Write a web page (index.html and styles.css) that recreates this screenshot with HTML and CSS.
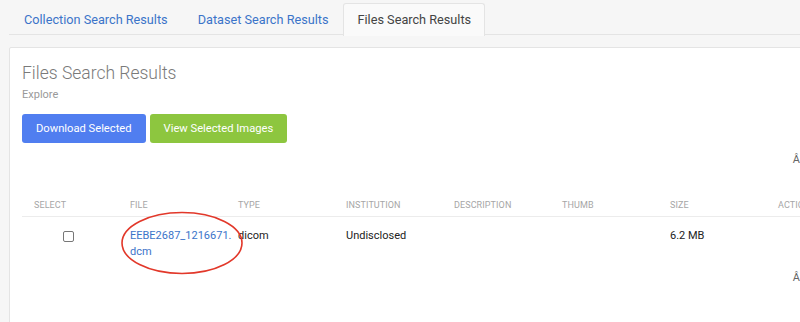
FILE: index.html
```html
<!DOCTYPE html>
<html>
<head>
    <meta charset="utf-8">
    <meta name="viewport" content="width=device-width, initial-scale=1">
    <title>Files Search Results</title>
    <link rel="stylesheet" href="styles.css">
</head>
<body>
    <ul class="tabs">
        <li class="tab"><a href="#">Collection Search Results</a></li>
        <li class="tab"><a href="#">Dataset Search Results</a></li>
        <li class="tab active"><a href="#">Files Search Results</a></li>
    </ul>

    <div class="card">
        <div class="card-title">Files Search Results</div>
        <div class="card-subtitle">Explore</div>

        <div class="actions">
            <button class="btn btn-blue">Download Selected</button>
            <button class="btn btn-green">View Selected Images</button>
        </div>

        <div class="pager">Â</div>

        <div class="results">
            <div class="row head-row">
                <div class="cell">Select</div>
                <div class="cell">File</div>
                <div class="cell">Type</div>
                <div class="cell">Institution</div>
                <div class="cell">Description</div>
                <div class="cell">Thumb</div>
                <div class="cell">Size</div>
                <div class="cell">Actions</div>
            </div>
            <div class="row body-row">
                <div class="cell select-cell"><input type="checkbox" class="check"></div>
                <div class="cell file-cell">
                    <a href="#">EEBE2687_1216671.<wbr>dcm</a>
                    <svg class="circle-mark" width="126" height="66" viewBox="0 0 126 66">
                        <ellipse cx="63" cy="33" rx="60" ry="30.5" fill="none" stroke="#e2382a" stroke-width="1.6"/>
                    </svg>
                </div>
                <div class="cell">dicom</div>
                <div class="cell">Undisclosed</div>
                <div class="cell"></div>
                <div class="cell"></div>
                <div class="cell">6.2 MB</div>
                <div class="cell"></div>
            </div>
        </div>

        <div class="pager pager-bottom">Â</div>
    </div>
</body>
</html>
```

FILE: styles.css
```css
:root {
    --bg-color: #f6f6f6;
    --border: #e4e4e4;
    --link: #3b74c9;
    --text: #222222;
    --blue: #507ef0;
    --green: #8dc63f;
}

* {
    margin: 0;
    padding: 0;
    box-sizing: border-box;
    font-family: Roboto, 'Liberation Sans', sans-serif;
}

html {
    overflow: hidden;
}

body {
    background-color: var(--bg-color);
    color: var(--text);
    padding: 3px 0 0 9px;
    width: 830px;
}

.tabs {
    list-style: none;
    display: flex;
    border-bottom: 1px solid var(--border);
    height: 32px;
}

.tab {
    height: 32px;
}

.tab a {
    display: block;
    height: 32px;
    line-height: 31px;
    padding: 0 14px;
    font-size: 12.7px;
    color: var(--link);
    text-decoration: none;
    border: 1px solid transparent;
    border-bottom: none;
    border-radius: 3px 3px 0 0;
}

.tab.active a {
    background-color: #fafafa;
    color: #444;
    border-color: var(--border);
    height: 33px;
    padding: 0 13px 0 14px;
    margin-left: -1px;
}

.card {
    margin-top: 12px;
    background-color: #ffffff;
    border: 1px solid var(--border);
    border-radius: 2px;
    width: 804px;
    padding: 13px 12px 40px 12px;
}

.card-title {
    font-size: 17.5px;
    font-weight: 300;
    color: #7a7a7a;
    line-height: 24px;
}

.card-subtitle {
    font-size: 11px;
    color: #999;
    line-height: 16px;
    margin-top: 2px;
}

.actions {
    display: flex;
    gap: 4px;
    margin-top: 11px;
}

.btn {
    height: 29px;
    padding: 0 14px;
    border: none;
    border-radius: 3px;
    color: #ffffff;
    font-size: 11.2px;
    cursor: pointer;
}

.btn-blue {
    background-color: var(--blue);
}

.btn-green {
    background-color: var(--green);
}

.pager {
    text-align: right;
    font-size: 11px;
    color: #666;
    line-height: 16px;
    margin-top: 9px;
}

.pager-bottom {
    margin-top: 2px;
}

.results {
    width: 852px;
    margin-top: 22px;
}

.row {
    display: grid;
    grid-template-columns: 96px repeat(7, 108px);
}

.head-row {
    border-bottom: 1px solid #ececec;
}

.head-row .cell {
    font-size: 9px;
    color: #a6a6a6;
    text-transform: uppercase;
    line-height: 14px;
    padding: 8px 12px 4px 12px;
    letter-spacing: 0.1px;
}

.body-row .cell {
    font-size: 11px;
    line-height: 16px;
    padding: 11px 12px 8px 12px;
}

.body-row .select-cell {
    padding-left: 41px;
}

.check {
    appearance: none;
    width: 11px;
    height: 11px;
    border: 1px solid #777;
    border-radius: 2px;
    background: #fff;
    margin-top: 3px;
    display: block;
}

.file-cell {
    position: relative;
}

.file-cell a {
    color: var(--link);
    text-decoration: none;
}

.circle-mark {
    position: absolute;
    left: 1px;
    top: -7px;
    pointer-events: none;
}
```
